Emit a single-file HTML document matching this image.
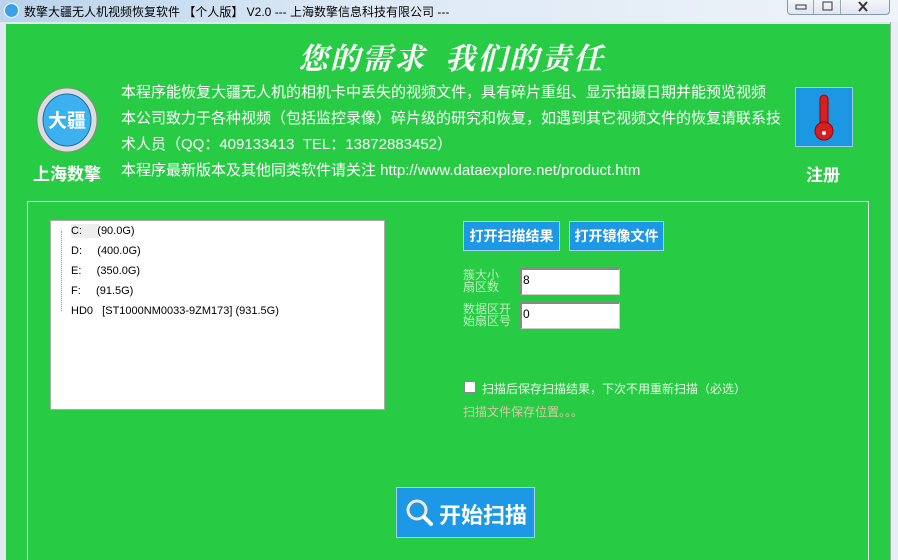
<!DOCTYPE html>
<html style="width:898px;height:560px;overflow:hidden"><head><meta charset="utf-8"><style>
*{margin:0;padding:0;box-sizing:border-box}
body{width:898px;height:560px;overflow:hidden;background:#dfe9f3;font-family:"Liberation Sans","Noto Sans CJK SC",sans-serif;position:relative}
.title{position:absolute;left:0;top:0;width:898px;height:22px;background:linear-gradient(90deg,#b9d3ec,#dde9f5 40%,#eef3f9);}
.title span{position:absolute;left:24px;top:3px;font-size:12px;color:#000;white-space:nowrap}
.ticon{position:absolute;left:4px;top:3px;width:15px;height:15px;border-radius:50%;background:#3aa0e8;border:1px solid #fff}
.btns{position:absolute;left:787px;top:-1px;width:103px;height:16px;border:1px solid #8a97a8;border-top:none;border-radius:0 0 4px 4px;background:linear-gradient(#f4f7fb,#dfe6ee)}
.btns div{position:absolute;top:0;height:15px;border-right:1px solid #9aa6b5}
.main{position:absolute;left:6px;top:24px;width:884px;height:536px;background:#27cc44}
.slogan{position:absolute;left:298px;top:34px;font-family:"Noto Serif CJK SC",serif;font-weight:bold;font-size:30px;color:#fff;letter-spacing:2px;font-style:italic;white-space:nowrap}
.info{position:absolute;left:121px;color:#fff;font-size:15px;white-space:nowrap}
.g{position:absolute;left:27px;top:201px;width:842px;height:359px;border:1px solid #dfe;border-bottom:none}
.tree{position:absolute;left:50px;top:220px;width:335px;height:190px;background:#fff;border:1px solid #aaa;font-size:11px;color:#000}
.tree div{position:absolute;left:20px;white-space:pre}
.bb{position:absolute;background:#1d98e6;border:1px solid #9fd0f0;color:#fff;font-weight:bold;font-size:14px;text-align:center}
.lbl{position:absolute;left:463px;font-size:12px;line-height:12px;color:#bff0c0}
.inp{position:absolute;left:520px;width:100px;height:27px;background:#fff;border:1px solid #ccc;border-top:2px solid #888;border-left:2px solid #888;font-size:12px;padding:3px 1px}
</style></head><body>
<div class="title"><div class="ticon"></div><span>数擎大疆无人机视频恢复软件 【个人版】 V2.0 --- 上海数擎信息科技有限公司 ---</span></div>
<div class="btns"><div style="left:0;width:26px"></div><div style="left:26px;width:27px"></div>
<svg style="position:absolute;left:0;top:0" width="103" height="16"><rect x="8" y="6" width="10" height="4" fill="none" stroke="#333"/><rect x="35" y="3" width="9" height="8" fill="none" stroke="#333"/><path d="M71 3l8 9M79 3l-8 9" stroke="#333" stroke-width="2"/></svg></div>
<div class="main"></div>
<div class="slogan">您的需求 &nbsp;我们的责任</div>
<div class="info" style="top:81px">本程序能恢复大疆无人机的相机卡中丢失的视频文件，具有碎片重组、显示拍摄日期并能预览视频</div>
<div class="info" style="top:107px">本公司致力于各种视频（包括监控录像）碎片级的研究和恢复，如遇到其它视频文件的恢复请联系技</div>
<div class="info" style="top:133px">术人员（QQ：409133413 &nbsp;TEL：13872883452）</div>
<div class="info" style="top:159px">本程序最新版本及其他同类软件请关注 http://www.dataexplore.net/product.htm</div>
<svg style="position:absolute;left:36px;top:87px" width="62" height="66"><ellipse cx="31" cy="33" rx="30" ry="32" fill="#ddd" stroke="#888"/><ellipse cx="31" cy="33" rx="24" ry="26" fill="#3bb1ef" stroke="#1a70b0"/><text x="31" y="40" font-size="19" font-weight="bold" fill="#fff" text-anchor="middle" font-family="Noto Sans CJK SC">大疆</text></svg>
<div style="position:absolute;left:33px;top:160px;color:#fff;font-weight:bold;font-size:17px">上海数擎</div>
<div style="position:absolute;left:795px;top:87px;width:58px;height:60px;background:#1c98e2;border:1px solid #9cd"></div>
<svg style="position:absolute;left:810px;top:93px" width="28" height="50"><rect x="10" y="2" width="8" height="34" rx="4" fill="#d42020" stroke="#900"/><circle cx="14" cy="38" r="9" fill="#d42020" stroke="#900"/><circle cx="14" cy="40" r="2" fill="#fff"/></svg>
<div style="position:absolute;left:806px;top:161px;color:#fff;font-weight:bold;font-size:17px">注册</div>
<div class="g"></div>
<div class="tree">
<div style="top:3px;left:20px;width:28px;height:14px;background:#eee"></div>
<div style="top:4px">C:     (90.0G)</div>
<div style="top:24px">D:     (400.0G)</div>
<div style="top:44px">E:     (350.0G)</div>
<div style="top:64px">F:     (91.5G)</div>
<div style="top:84px">HD0   [ST1000NM0033-9ZM173] (931.5G)</div>
<div style="left:10px;top:10px;height:80px;border-left:1px dotted #999"></div>
</div>
<div class="bb" style="left:463px;top:221px;width:97px;height:30px;line-height:28px">打开扫描结果</div>
<div class="bb" style="left:569px;top:221px;width:95px;height:30px;line-height:28px">打开镜像文件</div>
<div class="lbl" style="top:269px">簇大小<br>扇区数</div>
<div class="inp" style="top:268px">8</div>
<div class="lbl" style="top:303px">数据区开<br>始扇区号</div>
<div class="inp" style="top:302px">0</div>
<div style="position:absolute;left:464px;top:381px;width:12px;height:12px;background:#fff;border:1px solid #888"></div>
<div style="position:absolute;left:482px;top:380px;font-size:12px;color:#e8f8e8">扫描后保存扫描结果，下次不用重新扫描（必选）</div>
<div style="position:absolute;left:463px;top:403px;font-size:12px;color:#d8c8a8">扫描文件保存位置。。。</div>
<div class="bb" style="left:396px;top:487px;width:139px;height:51px"></div>
<svg style="position:absolute;left:405px;top:498px" width="30" height="30"><circle cx="12" cy="12" r="9" fill="none" stroke="#f3e6da" stroke-width="3"/><path d="M19 19l7 7" stroke="#fff" stroke-width="4" stroke-linecap="round"/></svg>
<div style="position:absolute;left:439px;top:498px;color:#fff;font-weight:bold;font-size:22px">开始扫描</div>
<div style="position:absolute;left:890px;top:22px;width:8px;height:538px;background:#e8eef5;border-left:1px solid #aaa"></div>
</body></html>
